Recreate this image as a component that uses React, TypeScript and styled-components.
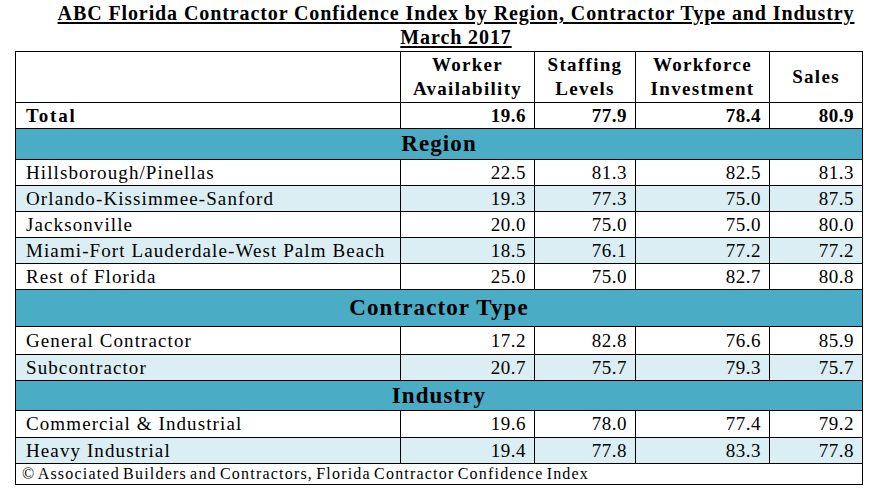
import React from "react";
import styled, { createGlobalStyle } from "styled-components";

const Global = createGlobalStyle`
  html, body { margin: 0; padding: 0; background: #ffffff; }
  body { font-family: "Liberation Serif", "Times New Roman", serif; color: #000; }
`;

const Page = styled.div`
  width: 872px;
  height: 494px;
  overflow: hidden;
  background: #fff;
`;

const TitleBlock = styled.div`
  padding: 1px 0 0 40px;
  text-align: center;
  font-weight: bold;
  font-size: 20px;
  letter-spacing: 0.9px;
  line-height: 24px;
  height: 51px;
  box-sizing: border-box;
`;

const TitleLine = styled.div`
  text-decoration: underline;
  text-underline-offset: 2px;
`;

const Table = styled.table`
  margin-left: 15px;
  border-collapse: collapse;
  table-layout: fixed;
  width: 847px;
`;

const Col = styled.col<{ $w: number }>`
  width: ${(p) => p.$w}px;
`;

const Row = styled.tr<{ $h: number; $shade?: boolean }>`
  height: ${(p) => p.$h}px;
  background: ${(p) => (p.$shade ? "#daeef3" : "#ffffff")};
`;

const HeadCell = styled.th`
  border: 1px solid #000;
  font-weight: bold;
  font-size: 19px;
  letter-spacing: 1.3px;
  line-height: 24px;
  text-align: center;
  padding: 0 2px;
  vertical-align: middle;
  white-space: nowrap;
`;

const LabelCell = styled.td<{ $bold?: boolean }>`
  border: 1px solid #000;
  font-size: 19px;
  letter-spacing: ${(p) => (p.$bold ? "1.8px" : "1.1px")};
  line-height: 22px;
  padding: 0 0 0 10px;
  font-weight: ${(p) => (p.$bold ? "bold" : "normal")};
  white-space: nowrap;
  vertical-align: middle;
`;

const NumCell = styled.td<{ $bold?: boolean }>`
  border: 1px solid #000;
  font-size: 19px;
  letter-spacing: 0.5px;
  line-height: 22px;
  padding: 0 8px 0 0;
  text-align: right;
  font-weight: ${(p) => (p.$bold ? "bold" : "normal")};
  vertical-align: middle;
`;

const SectionCell = styled.td`
  border: 1px solid #000;
  background: #4bacc6;
  font-weight: bold;
  font-size: 23px;
  letter-spacing: 1.1px;
  text-align: center;
  vertical-align: middle;
  padding: 0;
`;

const FootCell = styled.td`
  border: 1px solid #000;
  font-size: 16px;
  letter-spacing: 1.2px;
  word-spacing: -2px;
  padding: 0 0 0 6px;
  vertical-align: middle;
  white-space: nowrap;
`;

type DataRow = { label: string; values: string[]; shade?: boolean; h: number };
type Section = { title: string; h: number; rows: DataRow[] };

const sections: Section[] = [
  {
    title: "Region",
    h: 31,
    rows: [
      { label: "Hillsborough/Pinellas", values: ["22.5", "81.3", "82.5", "81.3"], h: 26 },
      { label: "Orlando-Kissimmee-Sanford", values: ["19.3", "77.3", "75.0", "87.5"], shade: true, h: 26 },
      { label: "Jacksonville", values: ["20.0", "75.0", "75.0", "80.0"], h: 26 },
      { label: "Miami-Fort Lauderdale-West Palm Beach", values: ["18.5", "76.1", "77.2", "77.2"], shade: true, h: 26 },
      { label: "Rest of Florida", values: ["25.0", "75.0", "82.7", "80.8"], h: 26 },
    ],
  },
  {
    title: "Contractor Type",
    h: 37,
    rows: [
      { label: "General Contractor", values: ["17.2", "82.8", "76.6", "85.9"], h: 28 },
      { label: "Subcontractor", values: ["20.7", "75.7", "79.3", "75.7"], shade: true, h: 26 },
    ],
  },
  {
    title: "Industry",
    h: 30,
    rows: [
      { label: "Commercial & Industrial", values: ["19.6", "78.0", "77.4", "79.2"], h: 27 },
      { label: "Heavy Industrial", values: ["19.4", "77.8", "83.3", "77.8"], shade: true, h: 26 },
    ],
  },
];

export default function App() {
  return (
    <Page>
      <Global />
      <TitleBlock>
        <TitleLine>ABC Florida Contractor Confidence Index by Region, Contractor Type and Industry</TitleLine>
        <TitleLine>March 2017</TitleLine>
      </TitleBlock>
      <Table>
        <colgroup>
          <Col $w={385} />
          <Col $w={134} />
          <Col $w={101} />
          <Col $w={134} />
          <Col $w={93} />
        </colgroup>
        <tbody>
          <Row $h={51}>
            <HeadCell />
            <HeadCell>Worker<br />Availability</HeadCell>
            <HeadCell>Staffing<br />Levels</HeadCell>
            <HeadCell>Workforce<br />Investment</HeadCell>
            <HeadCell>Sales</HeadCell>
          </Row>
          <Row $h={26}>
            <LabelCell $bold>Total</LabelCell>
            <NumCell $bold>19.6</NumCell>
            <NumCell $bold>77.9</NumCell>
            <NumCell $bold>78.4</NumCell>
            <NumCell $bold>80.9</NumCell>
          </Row>
          {sections.map((s) => (
            <React.Fragment key={s.title}>
              <Row $h={s.h}>
                <SectionCell colSpan={5}>{s.title}</SectionCell>
              </Row>
              {s.rows.map((r) => (
                <Row key={r.label} $h={r.h} $shade={r.shade}>
                  <LabelCell>{r.label}</LabelCell>
                  {r.values.map((v, i) => (
                    <NumCell key={i}>{v}</NumCell>
                  ))}
                </Row>
              ))}
            </React.Fragment>
          ))}
          <Row $h={21}>
            <FootCell colSpan={5}>© Associated Builders and Contractors, Florida Contractor Confidence Index</FootCell>
          </Row>
        </tbody>
      </Table>
    </Page>
  );
}
